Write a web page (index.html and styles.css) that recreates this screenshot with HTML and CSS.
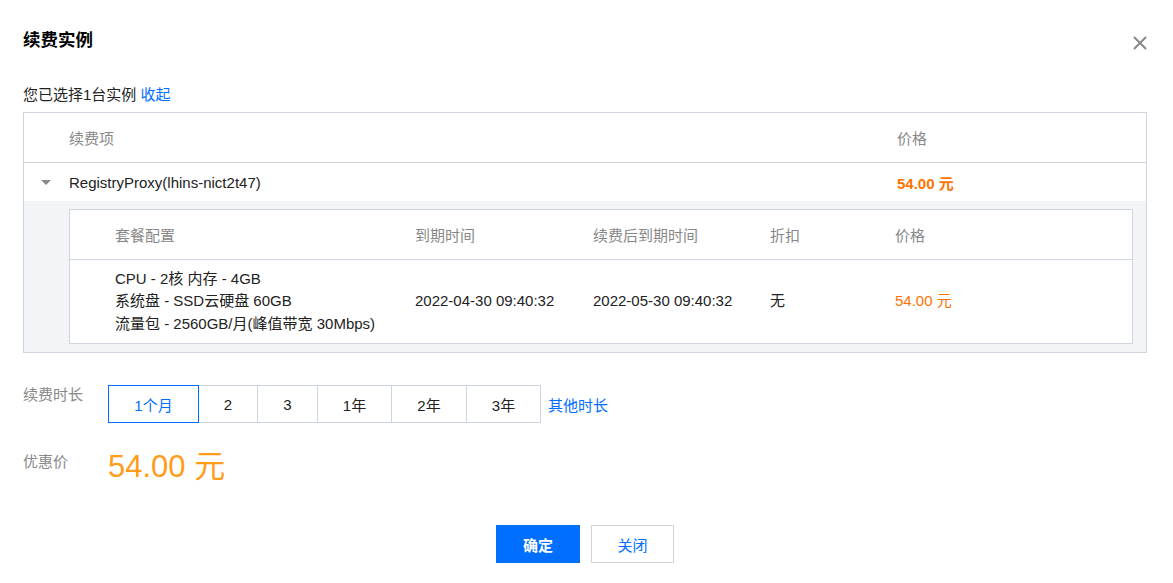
FILE: index.html
```html
<!DOCTYPE html>
<html lang="zh-CN">
<head>
<meta charset="utf-8">
<title>续费实例</title>
<link rel="stylesheet" href="styles.css">
</head>
<body>
<div class="dialog">
  <div class="head">
    <h3 class="title">续费实例</h3>
    <button class="close" aria-label="关闭">
      <svg width="14" height="14" viewBox="0 0 14 14"><path d="M1 1L13 13M13 1L1 13" stroke="#888" stroke-width="2" fill="none"/></svg>
    </button>
  </div>

  <div class="selected">您已选择1台实例 <a class="link">收起</a></div>

  <div class="table">
    <div class="t-row t-head">
      <div class="t-cell c-item">续费项</div>
      <div class="t-cell">价格</div>
    </div>
    <div class="t-row t-body">
      <div class="t-cell c-item">
        <span class="caret"></span>
        RegistryProxy(lhins-nict2t47)
      </div>
      <div class="t-cell price-bold">54.00 元</div>
    </div>
    <div class="expand">
      <div class="inner">
        <div class="i-row i-head">
          <div class="i-cell i-first">套餐配置</div>
          <div class="i-cell">到期时间</div>
          <div class="i-cell">续费后到期时间</div>
          <div class="i-cell">折扣</div>
          <div class="i-cell">价格</div>
        </div>
        <div class="i-row i-body">
          <div class="i-cell i-first">
            <div>CPU - 2核 内存 - 4GB</div>
            <div>系统盘 - SSD云硬盘 60GB</div>
            <div>流量包 - 2560GB/月(峰值带宽 30Mbps)</div>
          </div>
          <div class="i-cell">2022-04-30 09:40:32</div>
          <div class="i-cell">2022-05-30 09:40:32</div>
          <div class="i-cell">无</div>
          <div class="i-cell price">54.00 元</div>
        </div>
      </div>
    </div>
  </div>

  <div class="form">
    <div class="f-row">
      <div class="f-label">续费时长</div>
      <div class="f-ctrl">
        <div class="seg">
          <button class="seg-btn active w1">1个月</button>
          <button class="seg-btn w2">2</button>
          <button class="seg-btn w3">3</button>
          <button class="seg-btn w4">1年</button>
          <button class="seg-btn w5">2年</button>
          <button class="seg-btn w6">3年</button>
        </div>
        <a class="link other">其他时长</a>
      </div>
    </div>
    <div class="f-row price-row">
      <div class="f-label">优惠价</div>
      <div class="big-price">54.00 元</div>
    </div>
  </div>

  <div class="footer">
    <button class="btn primary">确定</button>
    <button class="btn">关闭</button>
  </div>
</div>
</body>
</html>
```

FILE: styles.css
```css
* { box-sizing: border-box; }
html, body { margin: 0; padding: 0; background: #fff; }
body {
  font-family: "Liberation Sans", Arial, "Noto Sans CJK SC", sans-serif;
  font-size: 15px;
  color: #000;
}
button { font-family: inherit; }

.dialog { padding: 28px 26px 0 23px; }

.head {
  display: flex;
  justify-content: space-between;
  align-items: flex-start;
  height: 24px;
}
.title {
  margin: 0;
  font-size: 17.5px;
  line-height: 24px;
  font-weight: bold;
  color: #000;
}
.close {
  border: 0;
  background: none;
  padding: 0;
  margin-top: 8px;
  margin-right: 0;
  width: 14px;
  height: 14px;
  display: block;
}
.close svg { display: block; }

.selected {
  margin-top: 33px;
  line-height: 20px;
  color: #222;
}
.link { color: #006eff; text-decoration: none; cursor: pointer; }

.table {
  margin-top: 7px;
  border: 1px solid #cfd5de;
}
.t-row {
  display: grid;
  grid-template-columns: 873px 1fr;
  align-items: center;
}
.t-head {
  height: 50px;
  border-bottom: 1px solid #cfd5de;
  color: #888;
}
.t-body { height: 38px; color: #222; }
.c-item { padding-left: 45px; position: relative; }
.caret {
  position: absolute;
  left: 17px;
  top: 50%;
  margin-top: -2px;
  width: 0; height: 0;
  border-left: 5px solid transparent;
  border-right: 5px solid transparent;
  border-top: 5px solid #888;
}
.price-bold { color: #ff7200; font-weight: bold; }
.price { color: #ff7200; }

.expand {
  background: #f3f4f7;
  padding: 8px 13px 8px 45px;
}
.inner {
  background: #fff;
  border: 1px solid #cfd5de;
}
.i-row {
  display: grid;
  grid-template-columns: 345px 178px 177px 125px 1fr;
  align-items: center;
}
.i-head {
  height: 50px;
  border-bottom: 1px solid #cfd5de;
  color: #888;
}
.i-body {
  height: 83px;
  line-height: 22.5px;
  color: #222;
}
.i-first { padding-left: 45px; }

.form { margin-top: 32px; }
.f-row { display: flex; align-items: flex-start; }
.f-label {
  width: 85px;
  flex: none;
  color: #888;
  line-height: 20px;
}
.f-ctrl { display: flex; align-items: center; }
.seg { display: flex; }
.seg-btn {
  height: 38px;
  margin: 0 0 0 -1px;
  padding: 0;
  border: 1px solid #cfd5de;
  background: #fff;
  color: #222;
  font-size: 15px;
  position: relative;
}
.seg-btn:first-child { margin-left: 0; }
.seg-btn.active { border-color: #006eff; color: #006eff; z-index: 1; }
.w1 { width: 91px; }
.w2 { width: 60px; }
.w3 { width: 61px; }
.w4 { width: 75px; }
.w5 { width: 76px; }
.w6 { width: 75px; }
.other { margin-left: 7px; }

.price-row { margin-top: 29px; }
.big-price {
  color: #ff9c19;
  font-size: 31px;
  line-height: 34px;
  margin-top: -2px;
}

.footer {
  margin-top: 41px;
  display: flex;
  justify-content: center;
  gap: 11px;
}
.btn {
  width: 83px;
  height: 38px;
  border: 1px solid #cfd5de;
  background: #fff;
  color: #006eff;
  font-size: 15px;
  padding: 0;
}
.btn.primary {
  width: 84px;
  background: #006eff;
  border-color: #006eff;
  color: #fff;
  font-weight: bold;
}
```
